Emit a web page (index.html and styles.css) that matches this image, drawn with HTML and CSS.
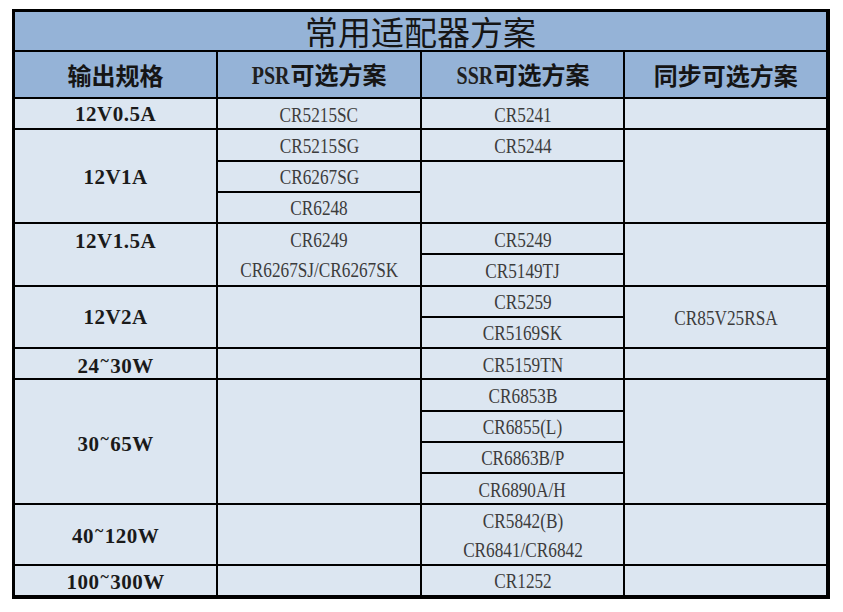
FILE: index.html
```html
<!DOCTYPE html>
<html lang="zh-CN">
<head>
<meta charset="utf-8">
<title>常用适配器方案</title>
<link rel="stylesheet" href="styles.css">
</head>
<body>
<div class="sheet">
<table class="grid">
  <colgroup><col class="c1"><col class="c2"><col class="c3"><col class="c4"></colgroup>
  <tr class="title-row"><td colspan="4" class="title">常用适配器方案</td></tr>
  <tr class="head-row">
    <th>输出规格</th>
    <th><span class="lat">PSR</span>可选方案</th>
    <th><span class="lat">SSR</span>可选方案</th>
    <th>同步可选方案</th>
  </tr>
  <tr>
    <td class="spec">12V0.5A</td>
    <td><span class="m">CR5215SC</span></td>
    <td><span class="m">CR5241</span></td>
    <td></td>
  </tr>
  <tr>
    <td class="spec" rowspan="3">12V1A</td>
    <td><span class="m">CR5215SG</span></td>
    <td><span class="m">CR5244</span></td>
    <td rowspan="3"></td>
  </tr>
  <tr>
    <td><span class="m">CR6267SG</span></td>
    <td rowspan="2"></td>
  </tr>
  <tr>
    <td><span class="m">CR6248</span></td>
  </tr>
  <tr>
    <td class="spec top" rowspan="2"><div class="line">12V1.5A</div></td>
    <td><span class="m">CR6249</span></td>
    <td><span class="m">CR5249</span></td>
    <td rowspan="2"></td>
  </tr>
  <tr>
    <td class="nt"><span class="m">CR6267SJ/CR6267SK</span></td>
    <td><span class="m">CR5149TJ</span></td>
  </tr>
  <tr>
    <td class="spec" rowspan="2">12V2A</td>
    <td rowspan="2"></td>
    <td><span class="m">CR5259</span></td>
    <td rowspan="2"><span class="m">CR85V25RSA</span></td>
  </tr>
  <tr>
    <td><span class="m">CR5169SK</span></td>
  </tr>
  <tr>
    <td class="spec">24<span class="tl">~</span>30W</td>
    <td></td>
    <td><span class="m">CR5159TN</span></td>
    <td></td>
  </tr>
  <tr>
    <td class="spec" rowspan="4">30<span class="tl">~</span>65W</td>
    <td rowspan="4"></td>
    <td><span class="m">CR6853B</span></td>
    <td rowspan="4"></td>
  </tr>
  <tr><td><span class="m">CR6855(L)</span></td></tr>
  <tr><td><span class="m">CR6863B/P</span></td></tr>
  <tr><td><span class="m">CR6890A/H</span></td></tr>
  <tr>
    <td class="spec" rowspan="2">40<span class="tl">~</span>120W</td>
    <td rowspan="2"></td>
    <td class="nb"><span class="m">CR5842(B)</span></td>
    <td rowspan="2"></td>
  </tr>
  <tr><td class="nt"><span class="m">CR6841/CR6842</span></td></tr>
  <tr>
    <td class="spec">100<span class="tl">~</span>300W</td>
    <td></td>
    <td><span class="m">CR1252</span></td>
    <td></td>
  </tr>
</table>
</div>
</body>
</html>
```
FILE: styles.css
```css
html, body {
  margin: 0;
  padding: 0;
  background: #ffffff;
}

.sheet {
  padding: 9px 0 0 12px;
}

.grid {
  border-collapse: collapse;
  table-layout: fixed;
  width: 818px;
  border-style: solid;
  border-color: #000;
  border-width: 3px 4px 4px 3px;
  background: #dce6f1;
}

.grid col { width: 25%; }

.grid td,
.grid th {
  border: 2px solid #000;
  padding: 3px 0 0 0;
  text-align: center;
  vertical-align: middle;
  height: 26.25px;
  line-height: 20px;
  white-space: nowrap;
}

.grid .title {
  height: 38px;
  padding: 0;
  background: #95b3d7;
  font-family: "Noto Sans CJK SC", sans-serif;
  font-weight: 400;
  font-size: 33px;
  line-height: 38px;
  color: #151515;
}

.head-row th {
  height: 45px;
  padding: 0;
  background: #95b3d7;
  font-family: "Noto Sans CJK SC", sans-serif;
  font-weight: 700;
  font-size: 24px;
  line-height: 30px;
  color: #151515;
}

.head-row .lat {
  font-family: "Liberation Serif", serif;
  font-weight: 700;
  font-size: 25px;
  display: inline-block;
  transform: scaleX(0.8);
  margin: 0 -4px 0 -4px;
  color: #202020;
}

.m {
  display: inline-block;
  font-family: "Liberation Serif", serif;
  font-size: 21px;
  line-height: 22px;
  color: #3c3c3c;
  transform: scaleX(0.82);
}

.spec {
  font-family: "Liberation Serif", serif;
  font-weight: 700;
  font-size: 21px;
  color: #1a1a1a;
  letter-spacing: 0.5px;
}

.grid .spec {
  padding-top: 1px;
  height: 28.25px;
}

.grid .spec.top {
  vertical-align: top;
  padding-top: 0;
}

.spec .line {
  height: 29px;
  line-height: 34px;
}

.tl {
  display: inline-block;
  vertical-align: 0.45em;
  font-size: 16px;
  line-height: 1;
  margin: 0 1px;
}

.grid .nb { border-bottom-style: hidden; }
.grid .nt { border-top-style: hidden; }
```
